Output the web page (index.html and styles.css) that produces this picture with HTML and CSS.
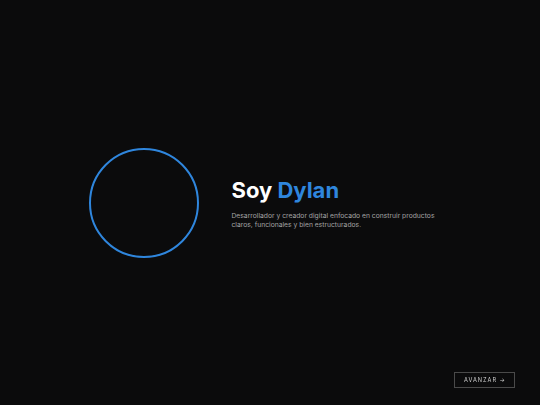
FILE: index.html
```html
<!DOCTYPE html>
<html lang="es">
<head>
<meta charset="utf-8">
<link rel="stylesheet" href="styles.css">
</head>
<body>
<main class="hero">
  <div class="avatar"></div>
  <div class="intro">
    <h1 class="title">Soy <span class="accent">Dylan</span></h1>
    <p class="lead">Desarrollador y creador digital enfocado en construir productos claros, funcionales y bien estructurados.</p>
  </div>
</main>
<button class="next">AVANZAR <span class="arrow">→</span></button>
</body>
</html>
```
FILE: styles.css
```css
html, body {
  margin: 0;
  height: 100%;
  background: #0b0b0c;
  font-family: Inter, "Liberation Sans", sans-serif;
}
.hero {
  height: 100%;
  display: flex;
  align-items: center;
  justify-content: center;
  gap: 33px;
}
.avatar {
  width: 106px;
  height: 106px;
  border: 2px solid #2f86dd;
  border-radius: 50%;
  flex: none;
}
.intro {
  width: 220px;
  padding-top: 2px;
}
.title {
  margin: 0 0 10px;
  font-size: 22px;
  font-weight: 700;
  color: #ffffff;
  line-height: 1.1;
}
.accent {
  color: #2f86dd;
}
.lead {
  margin: 0;
  font-size: 6.75px;
  line-height: 8.5px;
  color: #a3a3a3;
}
.next {
  position: fixed;
  right: 25px;
  bottom: 17px;
  width: 61px;
  height: 16px;
  padding: 0;
  background: transparent;
  border: 1px solid #4a4a4a;
  color: #cfcfcf;
  font-family: Inter, "Liberation Sans", sans-serif;
  font-size: 5.6px;
  letter-spacing: 1px;
}
.arrow {
  letter-spacing: 0;
}
```
